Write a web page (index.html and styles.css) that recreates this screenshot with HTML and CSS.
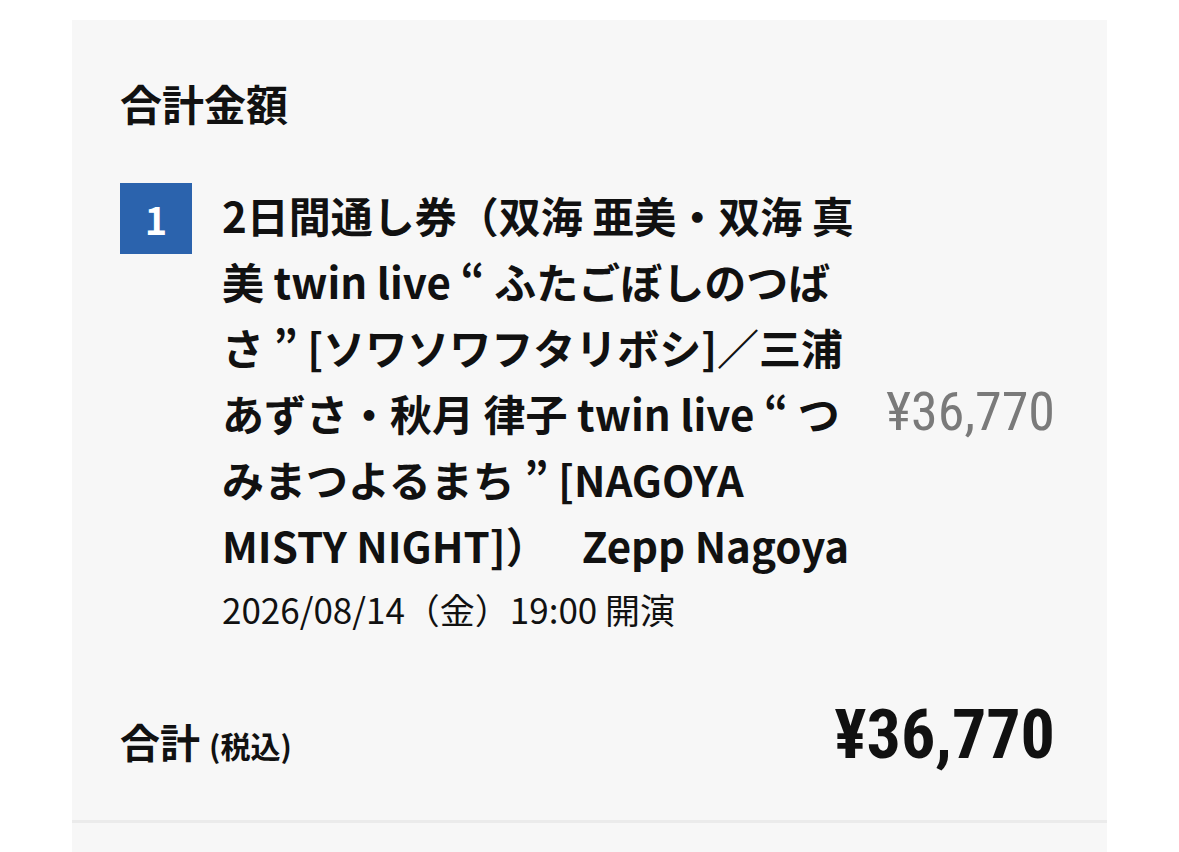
FILE: index.html
```html
<!DOCTYPE html>
<html lang="ja">
<head>
    <meta charset="utf-8">
    <link rel="stylesheet" href="styles.css">
</head>
<body>
    <div class="page">
        <!-- Order summary -->
        <section class="summary">
            <h2 class="summary-title">合計金額</h2>

            <div class="item">
                <div class="item-no">1</div>
                <div class="item-body">
                    <p class="item-name">2日間通し券（双海 亜美・双海 真美 twin live “ ふたごぼしのつばさ ” [ソワソワフタリボシ]／三浦あずさ・秋月 律子 twin live “ つみまつよるまち ” [NAGOYA MISTY NIGHT]）　<span class="venue">Zepp Nagoya</span></p>
                    <p class="item-date">2026/08/14（金）19:00 開演</p>
                </div>
                <div class="item-price">¥36,770</div>
            </div>

            <div class="total">
                <div class="total-label">合計 <small>(税込)</small></div>
                <div class="total-price">¥36,770</div>
            </div>
        </section>

        <section class="next"></section>
    </div>
</body>
</html>
```

FILE: styles.css
```css
body {
    margin: 0;
    background: #fff;
    color: #111;
    font-family: "Noto Sans CJK JP", sans-serif;
}
.page {
    margin: 0 72px;
    padding-top: 20px;
}
.summary {
    background: #f7f7f7;
    padding: 53px 52px 50px 48px;
    border-bottom: 3px solid #ebebeb;
}
.next {
    background: #f7f7f7;
    height: 40px;
}
.summary-title {
    margin: 0 0 49px;
    font-size: 42px;
    line-height: 60px;
    font-weight: 700;
}
.item {
    display: flex;
    align-items: center;
}
.item-no {
    align-self: flex-start;
    flex: none;
    width: 72px;
    height: 71px;
    margin-top: 1px;
    background: #2b63ad;
    color: #fff;
    font-size: 38px;
    font-weight: 700;
    display: flex;
    align-items: center;
    justify-content: center;
}
.item-body {
    width: 648px;
    margin-left: 30px;
}
.item-name {
    margin: 0;
    font-size: 42px;
    line-height: 66px;
    font-weight: 700;
}
.venue {
    margin-left: 13px;
}
.item-date {
    margin: 7px 0 0;
    font-size: 35px;
    line-height: 48px;
}
.item-price {
    flex: 1;
    padding-top: 8px;
    text-align: right;
    font-family: "Liberation Sans Narrow", "Roboto Condensed", "DejaVu Sans Condensed", sans-serif;
    font-size: 54px;
    color: #7a7a7a;
}
.total {
    display: flex;
    justify-content: space-between;
    align-items: baseline;
    margin-top: 68px;
}
.total-label {
    font-size: 40px;
    font-weight: 700;
}
.total-label small {
    font-size: 30px;
}
.total-price {
    font-family: "Liberation Sans Narrow", "Roboto Condensed", "DejaVu Sans Condensed", sans-serif;
    font-size: 68px;
    line-height: 1;
    font-weight: 700;
}
```
